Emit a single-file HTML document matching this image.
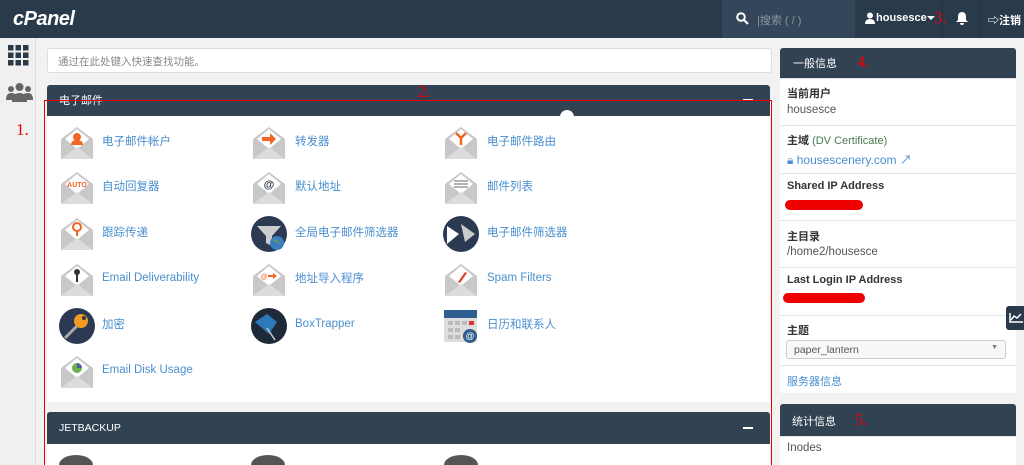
<!DOCTYPE html>
<html style="width:1024px;height:465px;overflow:hidden"><head><meta charset="utf-8"><style>
*{box-sizing:border-box;margin:0;padding:0}
body{width:1024px;height:465px;overflow:hidden;background:#f2f2f2;font-family:"Liberation Sans","Noto Sans CJK SC",sans-serif;position:relative}
.a{position:absolute}
.top{left:0;top:0;width:1024px;height:38px;background:#293a4a}
.lnk{color:#4a8fd0;font-size:11.5px}
.ic{position:absolute;width:36px;height:36px}
.hd{background:#314253;color:#fff;font-size:11px}
.rl{font-size:11px;color:#333;font-weight:bold}
.rv{font-size:11.5px;color:#555}
.red{color:#e00;font-family:"Liberation Serif",serif;font-size:17px}
.row{position:absolute;left:780px;width:236px;border-top:1px solid #e4e4e4;background:#fff}
</style></head><body>
<div class="a top"></div>
<div class="a" style="left:13px;top:8px;color:#fff;font-size:20px;font-weight:bold;font-style:italic;letter-spacing:-0.5px">cPanel</div>
<div class="a" style="left:722px;top:0;width:133px;height:38px;background:#33465a"></div>
<svg class="a" style="left:736px;top:12px" width="13" height="13" viewBox="0 0 13 13"><circle cx="5" cy="5" r="3.8" stroke="#fff" stroke-width="2" fill="none"/><path d="M8 8l4 4" stroke="#fff" stroke-width="2.2"/></svg>
<div class="a" style="left:757px;top:12px;color:#8a96a2;font-size:11px">|搜索 ( / )</div>
<svg class="a" style="left:865px;top:12px" width="10" height="12" viewBox="0 0 10 12"><circle cx="5" cy="3.5" r="3" fill="#fff"/><path d="M0 12q0-5 5-5t5 5z" fill="#fff"/></svg>
<div class="a" style="left:876px;top:12px;color:#fff;font-size:11px;font-weight:bold">housesce</div>
<div class="a" style="left:927px;top:16px;border:4px solid transparent;border-top-color:#fff"></div>
<div class="a red" style="left:934px;top:8px">3.</div>
<div class="a" style="left:942px;top:0;width:1px;height:38px;background:#22313f"></div>
<svg class="a" style="left:956px;top:12px" width="12" height="13" viewBox="0 0 12 13"><path d="M6 0q4 0 4 5v3l2 2H0l2-2V5q0-5 4-5zM4 11h4q0 2-2 2t-2-2z" fill="#fff"/></svg>
<div class="a" style="left:980px;top:0;width:1px;height:38px;background:#22313f"></div>
<div class="a" style="left:988px;top:12px;color:#fff;font-size:11px;font-weight:bold">⇨注销</div>
<div class="a" style="left:0;top:38px;width:36px;height:427px;background:#f0f0f0;border-right:1px solid #ddd"></div>
<svg class="a" style="left:8px;top:45px" width="21" height="21"><g fill="#2b3a4a"><rect x="0" y="0" width="5.5" height="5.5"/><rect x="7.5" y="0" width="5.5" height="5.5"/><rect x="15" y="0" width="5.5" height="5.5"/><rect x="0" y="7.5" width="5.5" height="5.5"/><rect x="7.5" y="7.5" width="5.5" height="5.5"/><rect x="15" y="7.5" width="5.5" height="5.5"/><rect x="0" y="15" width="5.5" height="5.5"/><rect x="7.5" y="15" width="5.5" height="5.5"/><rect x="15" y="15" width="5.5" height="5.5"/></g></svg>
<svg class="a" style="left:6px;top:82px" width="27" height="20"><g fill="#666"><circle cx="13.5" cy="5" r="4"/><circle cx="5" cy="7" r="3"/><circle cx="22" cy="7" r="3"/><path d="M6 20q0-9 7.5-9t7.5 9z"/><path d="M0 18q0-7 5-7t5 3v4z"/><path d="M27 18q0-7-5-7t-5 3v4z"/></g></svg>
<div class="a" style="left:47px;top:48px;width:725px;height:25px;background:#fff;border:1px solid #ddd;border-radius:3px;padding:5px 10px;font-size:10.5px;color:#888">通过在此处键入快速查找功能。</div>
<div class="a hd" style="left:47px;top:85px;width:723px;height:31px;padding:7px 12px;border-radius:3px 3px 0 0">电子邮件</div>
<div class="a" style="left:743px;top:99px;width:10px;height:2px;background:#fff"></div>
<div class="a" style="left:47px;top:116px;width:723px;height:286px;background:#fff"></div>
<div class="a hd" style="left:47px;top:412px;width:723px;height:32px;padding:10px 12px;font-size:10.5px;border-radius:3px 3px 0 0">JETBACKUP</div>
<div class="a" style="left:743px;top:427px;width:10px;height:2px;background:#fff"></div>
<div class="a" style="left:47px;top:444px;width:723px;height:21px;background:#fff;overflow:hidden">
<div class="a" style="left:12px;top:11px;width:34px;height:20px;border-radius:50%;background:#555"></div>
<div class="a" style="left:204px;top:11px;width:34px;height:20px;border-radius:50%;background:#555"></div>
<div class="a" style="left:397px;top:11px;width:34px;height:20px;border-radius:50%;background:#555"></div>
</div>

<svg width="0" height="0" style="position:absolute"><defs><g id="env"><path d="M2 14L18 2l16 12v20H2z" fill="#c8c8c8"/><path d="M6 14L18 4l12 10-12 10z" fill="#fff"/><path d="M2 34L18 22l16 12z" fill="#dcdcdc"/></g></defs></svg>
<svg class="ic" style="left:59px;top:125px"><use href="#env"/><circle cx="18" cy="12" r="4" fill="#f26522"/><path d="M12 20q0-5 6-5t6 5z" fill="#f26522"/></svg>
<div class="a lnk" style="left:102px;top:133px">电子邮件帐户</div>
<svg class="ic" style="left:251px;top:125px"><use href="#env"/><path d="M11 12h8v-4l6 6-6 6v-4h-8z" fill="#f26522"/></svg>
<div class="a lnk" style="left:295px;top:133px">转发器</div>
<svg class="ic" style="left:443px;top:125px"><use href="#env"/><path d="M18 20v-7M18 13l-5-5M18 13l5-5" stroke="#f26522" stroke-width="2.5" fill="none"/></svg>
<div class="a lnk" style="left:487px;top:133px">电子邮件路由</div>
<svg class="ic" style="left:59px;top:170px"><use href="#env"/><text x="18" y="17" font-size="7" fill="#f26522" text-anchor="middle" font-weight="bold" font-family="Liberation Sans">AUTO</text></svg>
<div class="a lnk" style="left:102px;top:178px">自动回复器</div>
<svg class="ic" style="left:251px;top:170px"><use href="#env"/><text x="18" y="18" font-size="11" fill="#2b3a4a" text-anchor="middle" font-weight="bold" font-family="Liberation Sans">@</text></svg>
<div class="a lnk" style="left:295px;top:178px">默认地址</div>
<svg class="ic" style="left:443px;top:170px"><use href="#env"/><path d="M11 11h14M11 14h14M11 17h14" stroke="#999" stroke-width="1.5"/></svg>
<div class="a lnk" style="left:487px;top:178px">邮件列表</div>
<svg class="ic" style="left:59px;top:216px"><use href="#env"/><circle cx="18" cy="11" r="4" fill="none" stroke="#f26522" stroke-width="2"/><path d="M18 15v5" stroke="#f26522" stroke-width="2"/></svg>
<div class="a lnk" style="left:102px;top:224px">跟踪传递</div>
<svg class="ic" style="left:251px;top:216px"><circle cx="18" cy="18" r="18" fill="#2b3a52"/><path d="M6 10h24l-9 10v10l-6-3v-7z" fill="#ccc"/><circle cx="26" cy="27" r="7" fill="#3a7ec0"/><path d="M22 24q3-2 5 1t3 4" fill="#5ba34a"/></svg>
<div class="a lnk" style="left:295px;top:224px">全局电子邮件筛选器</div>
<svg class="ic" style="left:443px;top:216px"><circle cx="18" cy="18" r="18" fill="#2b3a52"/><path d="M4 10l12 8-12 10z" fill="#fff"/><path d="M18 8l14 10-10 8z" fill="#ccc"/></svg>
<div class="a lnk" style="left:487px;top:224px">电子邮件筛选器</div>
<svg class="ic" style="left:59px;top:262px"><use href="#env"/><circle cx="18" cy="10" r="3" fill="#333"/><path d="M18 12v8" stroke="#333" stroke-width="2"/></svg>
<div class="a lnk" style="left:102px;top:272px">Email Deliverability</div>
<svg class="ic" style="left:251px;top:262px"><use href="#env"/><text x="13" y="17" font-size="7" fill="#f26522" text-anchor="middle" font-family="Liberation Sans">@</text><path d="M17 13h5v-2l4 3-4 3v-2h-5z" fill="#f26522"/></svg>
<div class="a lnk" style="left:295px;top:270px">地址导入程序</div>
<svg class="ic" style="left:443px;top:262px"><use href="#env"/><path d="M15 20l7-10 2 1-7 10z" fill="#e04030"/></svg>
<div class="a lnk" style="left:487px;top:272px">Spam Filters</div>
<svg class="ic" style="left:59px;top:308px"><circle cx="18" cy="18" r="18" fill="#2b3a52"/><path d="M6 30l12-12" stroke="#aaa" stroke-width="3"/><circle cx="22" cy="13" r="7" fill="#f29a22"/><circle cx="25" cy="10" r="2" fill="#2b3a52"/></svg>
<div class="a lnk" style="left:102px;top:316px">加密</div>
<svg class="ic" style="left:251px;top:308px"><circle cx="18" cy="18" r="18" fill="#1e2a38"/><path d="M4 14l12-8 10 8-8 12z" fill="#2d7ab8"/><path d="M16 20l8 12" stroke="#ccc" stroke-width="1.5"/></svg>
<div class="a lnk" style="left:295px;top:318px">BoxTrapper</div>
<svg class="ic" style="left:443px;top:308px"><rect x="1" y="2" width="33" height="32" rx="2" fill="#ddd"/><rect x="1" y="2" width="33" height="8" fill="#2d5e8e"/><g fill="#bbb"><rect x="5" y="13" width="5" height="4"/><rect x="12" y="13" width="5" height="4"/><rect x="19" y="13" width="5" height="4"/><rect x="5" y="20" width="5" height="4"/><rect x="12" y="20" width="5" height="4"/><rect x="5" y="27" width="5" height="4"/><rect x="12" y="27" width="5" height="4"/></g><rect x="26" y="13" width="5" height="4" fill="#d33"/><circle cx="27" cy="28" r="7" fill="#2d5e8e"/><text x="27" y="31" font-size="9" fill="#fff" text-anchor="middle" font-family="Liberation Sans">@</text></svg>
<div class="a lnk" style="left:487px;top:316px">日历和联系人</div>
<svg class="ic" style="left:59px;top:354px"><use href="#env"/><circle cx="18" cy="14" r="5" fill="#6ab04c"/><path d="M18 14V9a5 5 0 0 1 5 5z" fill="#4a5fa0"/></svg>
<div class="a lnk" style="left:102px;top:364px">Email Disk Usage</div>

<div class="a hd" style="left:780px;top:48px;width:236px;height:30px;padding:7px 13px;border-radius:3px 3px 0 0">一般信息</div>
<div class="a red" style="left:857px;top:52px">4.</div>
<div class="row" style="top:78px;height:47px"></div>
<div class="a rl" style="left:787px;top:85px">当前用户</div>
<div class="a rv" style="left:787px;top:104px">housesce</div>
<div class="row" style="top:125px;height:48px"></div>
<div class="a rl" style="left:787px;top:132px">主域 <span style="color:#4a7a50;font-weight:normal">(DV Certificate)</span></div>
<div class="a lnk" style="left:787px;top:151px;font-size:12px">🔒︎ housescenery.com ↗</div>
<div class="row" style="top:173px;height:48px"></div>
<div class="a rl" style="left:787px;top:180px">Shared IP Address</div>
<div class="a" style="left:785px;top:200px;width:78px;height:10px;background:#e00;border-radius:6px"></div>
<div class="row" style="top:220px;height:47px"></div>
<div class="a rl" style="left:787px;top:228px">主目录</div>
<div class="a rv" style="left:787px;top:246px">/home2/housesce</div>
<div class="row" style="top:267px;height:48px"></div>
<div class="a rl" style="left:787px;top:274px">Last Login IP Address</div>
<div class="a" style="left:783px;top:293px;width:82px;height:10px;background:#e00;border-radius:6px"></div>
<div class="row" style="top:315px;height:50px"></div>
<div class="a rl" style="left:787px;top:322px">主题</div>
<div class="a" style="left:786px;top:340px;width:220px;height:19px;border:1px solid #ccc;border-radius:3px;background:#f8f8f8;font-size:10.5px;color:#555;padding:3px 7px">paper_lantern<span style="position:absolute;right:7px;top:3px;font-size:7px;color:#777">▼</span></div>
<div class="row" style="top:365px;height:28px;border-radius:0 0 3px 3px"></div>
<div class="a lnk" style="left:787px;top:373px;font-size:11px">服务器信息</div>
<div class="a hd" style="left:780px;top:404px;width:236px;height:32px;padding:9px 12px;border-radius:3px 3px 0 0">统计信息</div>
<div class="a red" style="left:855px;top:410px">5.</div>
<div class="row" style="top:436px;height:29px"></div>
<div class="a rv" style="left:787px;top:442px">Inodes</div>
<div class="a" style="left:1006px;top:306px;width:18px;height:24px;background:#2b3a4a;border-radius:3px 0 0 3px"></div>
<svg class="a" style="left:1009px;top:312px" width="14" height="11"><path d="M1 1v9h13M2 8l3-4 3 2 4-4" stroke="#fff" stroke-width="1.5" fill="none"/></svg>

<div class="a" style="left:44px;top:100px;width:728px;height:370px;border:1.5px solid #e00;border-bottom:none"></div>
<div class="a red" style="left:418px;top:82px">2.</div>
<div class="a red" style="left:16px;top:120px">1.</div>
<div class="a" style="left:560px;top:110px;width:14px;height:14px;border-radius:50%;background:#fff"></div>
</body></html>
